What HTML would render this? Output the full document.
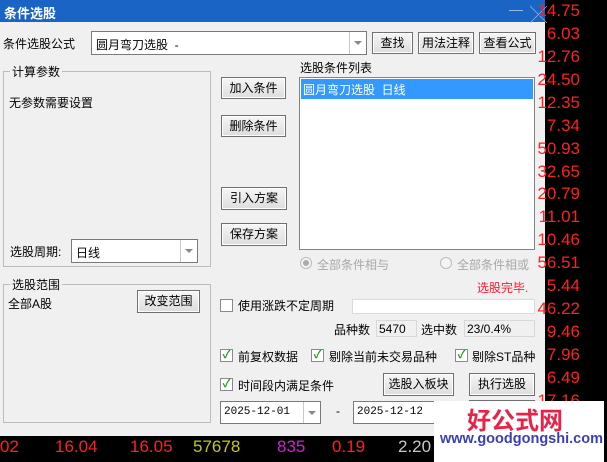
<!DOCTYPE html>
<html><head><meta charset="utf-8"><style>
*{margin:0;padding:0;box-sizing:border-box}
body{width:607px;height:462px;background:#000;position:relative;overflow:hidden;font-family:"Liberation Sans","Noto Sans CJK SC",sans-serif;font-size:12px;color:#000}
.a{position:absolute;white-space:nowrap}
#dlg{position:absolute;left:0;top:0;width:545px;height:436px;background:#f0f0f0}
.btn{position:absolute;border:1px solid #707070;background:linear-gradient(#f6f6f6,#dddddd);text-align:center;font-size:12px;line-height:20px;box-shadow:inset 0 0 0 1px #fff}
.grp{position:absolute;border:1px solid #bcbcbc}
.gl{position:absolute;background:#f0f0f0;padding:0 2px;font-size:12px;top:-9px;left:6px}
.cmb{position:absolute;background:#fff;border:1px solid #7a7a7a}
.arr{position:absolute;right:0;top:0;bottom:0;width:17px;border-left:1px solid #c8c8c8}
.arr:after{content:"";position:absolute;left:4px;top:50%;margin-top:-2px;border-left:4px solid transparent;border-right:4px solid transparent;border-top:4px solid #888}
.cb{position:absolute;width:13px;height:13px;border:1px solid #8a8a8a;background:#fff;color:#1a9a1a;font-size:11px;line-height:11px;text-align:center;font-weight:bold}
.num{position:absolute;right:27px;color:#ff2020;font-size:17px;font-family:"Liberation Sans",sans-serif}
.rb{position:absolute;width:12px;height:12px;border-radius:50%;border:1px solid #bbb;background:#f4f4f4}
</style></head><body>
<div id="dlg">
<div class="a" style="left:0;top:0;width:545px;height:22px;background:#1a64c6"></div>
<div class="a" style="left:4px;top:3px;color:#fff;font-weight:bold;font-size:13px">条件选股</div>
<div class="a" style="left:509px;top:10px;width:14px;height:1px;background:#9ab8e4"></div>
<div class="a" style="left:530px;top:1px;color:#9ab8e4;font-size:17px">╳</div>

<div class="a" style="left:3px;top:35px">条件选股公式</div>
<div class="cmb" style="left:91px;top:31px;width:276px;height:24px"><span class="a" style="left:4px;top:4px">圆月弯刀选股&nbsp;&nbsp;-</span><div class="arr"></div></div>
<div class="btn" style="left:372px;top:32px;width:41px;height:22px">查找</div>
<div class="btn" style="left:418px;top:32px;width:56px;height:22px">用法注释</div>
<div class="btn" style="left:479px;top:32px;width:57px;height:22px">查看公式</div>

<div class="grp" style="left:3px;top:71px;width:208px;height:196px"><span class="gl">计算参数</span>
<span class="a" style="left:5px;top:22px">无参数需要设置</span>
<span class="a" style="left:6px;top:171px">选股周期:</span></div>
<div class="cmb" style="left:71px;top:239px;width:127px;height:24px"><span class="a" style="left:4px;top:4px">日线</span><div class="arr"></div></div>

<div class="grp" style="left:3px;top:284px;width:208px;height:139px"><span class="gl">选股范围</span>
<span class="a" style="left:4px;top:10px">全部A股</span></div>
<div class="btn" style="left:137px;top:290px;width:63px;height:23px">改变范围</div>

<div class="btn" style="left:221px;top:77px;width:65px;height:22px">加入条件</div>
<div class="btn" style="left:221px;top:115px;width:65px;height:22px">删除条件</div>
<div class="btn" style="left:221px;top:187px;width:66px;height:23px">引入方案</div>
<div class="btn" style="left:221px;top:223px;width:66px;height:23px">保存方案</div>

<div class="a" style="left:300px;top:59px">选股条件列表</div>
<div class="a" style="left:299px;top:77px;width:236px;height:173px;background:#fff;border:1px solid #828282"></div>
<div class="a" style="left:301px;top:79px;width:232px;height:20px;background:#3399ff;color:#fff;padding:2px 2px">圆月弯刀选股&nbsp;&nbsp;日线</div>

<div class="rb" style="left:300px;top:257px"></div><div class="a" style="left:303px;top:260px;width:6px;height:6px;border-radius:50%;background:#aaa"></div>
<div class="a" style="left:317px;top:256px;color:#a8a8a8">全部条件相与</div>
<div class="rb" style="left:440px;top:257px"></div>
<div class="a" style="left:457px;top:256px;color:#a8a8a8">全部条件相或</div>
<div class="a" style="left:477px;top:279px;color:#ff1a30">选股完毕.</div>

<div class="cb" style="left:220px;top:299px"></div>
<div class="a" style="left:238px;top:297px">使用涨跌不定周期</div>
<div class="a" style="left:352px;top:299px;width:183px;height:15px;background:#fff;border:1px solid #dadada"></div>
<div class="a" style="left:334px;top:321px">品种数</div>
<div class="a" style="left:376px;top:320px;width:41px;height:17px;border:1px solid #d8d8d8;padding:1px 2px">5470</div>
<div class="a" style="left:421px;top:321px">选中数</div>
<div class="a" style="left:464px;top:320px;width:71px;height:17px;border:1px solid #d8d8d8;padding:1px 2px">23/0.4%</div>

<div class="cb" style="left:220px;top:349px">✓</div><div class="a" style="left:238px;top:348px">前复权数据</div>
<div class="cb" style="left:311px;top:349px">✓</div><div class="a" style="left:329px;top:348px">剔除当前未交易品种</div>
<div class="cb" style="left:455px;top:349px">✓</div><div class="a" style="left:472px;top:348px">剔除ST品种</div>
<div class="cb" style="left:220px;top:378px">✓</div><div class="a" style="left:238px;top:377px">时间段内满足条件</div>
<div class="btn" style="left:383px;top:373px;width:71px;height:23px">选股入板块</div>
<div class="btn" style="left:469px;top:373px;width:66px;height:23px">执行选股</div>
<div class="btn" style="left:469px;top:400px;width:66px;height:23px"></div>

<div class="cmb" style="left:220px;top:401px;width:101px;height:23px"><span class="a" style="left:3px;top:4px;font-family:'Liberation Mono',monospace;font-size:11px">2025-12-01</span><div class="arr"></div></div>
<div class="a" style="left:336px;top:404px">-</div>
<div class="cmb" style="left:353px;top:401px;width:100px;height:23px"><span class="a" style="left:3px;top:4px;font-family:'Liberation Mono',monospace;font-size:11px">2025-12-12</span></div>
</div>

<div class="num" style="top:1px">14.75</div>
<div class="num" style="top:24px">6.03</div>
<div class="num" style="top:47px">12.76</div>
<div class="num" style="top:70px">24.50</div>
<div class="num" style="top:93px">12.35</div>
<div class="num" style="top:116px">7.34</div>
<div class="num" style="top:139px">50.93</div>
<div class="num" style="top:162px">32.65</div>
<div class="num" style="top:184px">20.79</div>
<div class="num" style="top:207px">11.01</div>
<div class="num" style="top:230px">10.46</div>
<div class="num" style="top:253px">56.51</div>
<div class="num" style="top:276px">5.44</div>
<div class="num" style="top:299px">46.22</div>
<div class="num" style="top:322px">9.46</div>
<div class="num" style="top:345px">7.96</div>
<div class="num" style="top:368px">6.49</div>
<div class="num" style="top:391px">17.16</div>

<div class="a" style="left:0;top:437px;font-size:17px;color:#ff2020">02</div>
<div class="a" style="left:55px;top:437px;font-size:17px;color:#ff2020">16.04</div>
<div class="a" style="left:130px;top:437px;font-size:17px;color:#ff2020">16.05</div>
<div class="a" style="left:193px;top:437px;font-size:17px;color:#c8c800">57678</div>
<div class="a" style="left:277px;top:437px;font-size:17px;color:#d020d0">835</div>
<div class="a" style="left:332px;top:437px;font-size:17px;color:#ff2020">0.19</div>
<div class="a" style="left:398px;top:437px;font-size:17px;color:#c8c8c8">2.20</div>

<div class="a" style="left:434px;top:401px;width:170px;height:61px;background:#fff"></div>
<div class="a" style="left:467px;top:401px;font-size:24px;font-weight:bold;color:#e8234a">好公式网</div>
<div class="a" style="left:440px;top:431px;font-size:14.5px;font-weight:bold;color:#3b3fb5">www.goodgongshi.com</div>
</body></html>
